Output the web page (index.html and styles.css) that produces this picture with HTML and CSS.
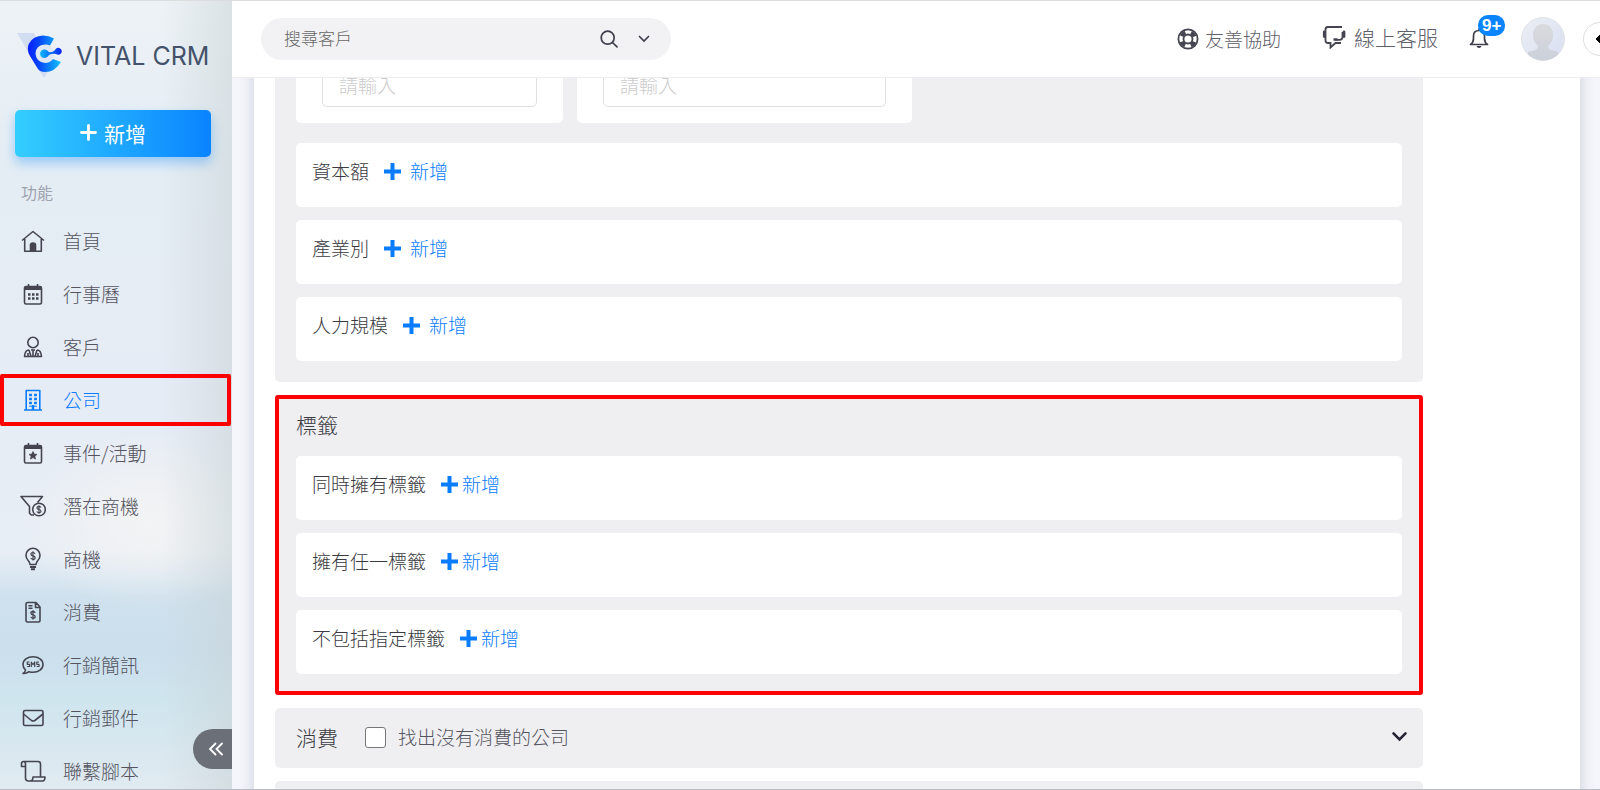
FILE: index.html
```html
<!DOCTYPE html>
<html lang="zh-Hant">
<head>
<meta charset="utf-8">
<title>Vital CRM</title>
<link rel="stylesheet" href="styles.css">
</head>
<body>
<svg class="defs" aria-hidden="true">
  <symbol id="plus" viewBox="0 0 17 17"><path d="M8.500 2v13M2 8.500h13" fill="none" stroke="currentColor" stroke-width="4" stroke-linecap="square"/></symbol>
  <symbol id="chevron" viewBox="0 0 14 10"><path d="M2 2l5 5 5-5" fill="none" stroke="currentColor" stroke-width="2.200" stroke-linecap="round"/></symbol>
</svg>
<div class="app">
  <aside class="sidebar">
    <a class="logo" href="#">
      <svg class="logo-mark" viewBox="0 0 45 45" aria-hidden="true">
        <defs>
          <linearGradient id="lg" x1="0" y1="0" x2="1" y2="0"><stop offset="0" stop-color="#0a1dfb"/><stop offset=".35" stop-color="#0648f8"/><stop offset="1" stop-color="#12c4fb"/></linearGradient>
          <linearGradient id="lg2" x1="0" y1="0" x2="1" y2="0"><stop offset="0" stop-color="#0cb6fb"/><stop offset="1" stop-color="#0a22f8"/></linearGradient>
        </defs>
        <path d="M0 0h17l8 16 6 23-3 5q-1 1-2 0z" fill="#d3ddf2"/>
        <circle cx="27" cy="21" r="10" fill="#dfe7f5"/>
        <path d="M37 5.500Q32 2.500 26 2.500 16 3 12 10.500 9 16 13 23l8 13q2 3 7 3 10 0 16-10l-8-3q-3 4-8 4-9-1-9.500-9.500Q19 12 28 11.500q3 0 5 1z" fill="url(#lg)"/>
        <path d="M28 16.500q2 0 4 2.500 3 1 6-2a3.500 3.500 0 1 1 1 4q-4-1-7 1-2 3-4 3a4.300 4.300 0 1 1 0-8.500z" fill="url(#lg2)"/>
      </svg>
      <span class="logo-text">VITAL CRM</span>
    </a>
    <button class="create" type="button"><svg viewBox="0 0 17 17" aria-hidden="true"><path d="M8.500 1.500v14M1.500 8.500h14" fill="none" stroke="#fff" stroke-width="2.800" stroke-linecap="round"/></svg>新增</button>
    <h2 class="nav-title">功能</h2>
    <nav class="nav">
      <a class="nav-item" href="#"><svg viewBox="0 0 26 26"><path d="M2 12.500L13 3.500l11 9M4.700 11v12.300h16.600V11"/><path class="solid" d="M10.500 23v-6q0-2 2.500-2t2.500 2v6z"/></svg>首頁</a>
      <a class="nav-item" href="#"><svg viewBox="0 0 26 26"><rect x="4.500" y="5.500" width="17" height="17.500" rx="1.500"/><path d="M4.500 7.500h17" stroke-width="3"/><path d="M8.500 3v3M17.500 3v3"/><path d="M8 13.500h10.500M8 17.500h10.500" stroke-width="2.400" stroke-dasharray="2.500 1.500"/></svg>行事曆</a>
      <a class="nav-item" href="#"><svg viewBox="0 0 26 26"><circle cx="13" cy="8.500" r="5.200"/><path d="M9 16q-4 0-4.500 6.500h17Q21 16 17 16M9 16l2 6.500M17 16l-2 6.500M11 16h4M13 16v6M8 19v3.500M18 19v3.500"/></svg>客戶</a>
      <a class="nav-item active" href="#" aria-current="page"><svg viewBox="0 0 26 26"><path d="M6.200 23V3.500h13.600V23M4 23h18"/><path d="M10.500 6.800v13M15.500 6.800v13" stroke-width="2.800" stroke-dasharray="2.500 1.500"/><path d="M13 18v5" stroke-width="2.500"/></svg>公司</a>
      <a class="nav-item" href="#"><svg viewBox="0 0 26 26"><rect x="4.500" y="5.500" width="17" height="17.500" rx="1.500"/><path d="M4.500 7.500h17" stroke-width="3"/><path d="M8.500 3v3M17.500 3v3"/><path class="solid" d="M13 11.500l1.200 2.600 2.800.3-2.100 1.900.6 2.800-2.500-1.500-2.500 1.500.6-2.800-2.100-1.900 2.800-.3z" stroke-width=".7"/></svg>事件/活動</a>
      <a class="nav-item" href="#"><svg viewBox="0 0 26 26"><path d="M11 22l-1.500-2v-6.500L1 3.500h21.500L17.500 9.500M11 22h3"/><circle cx="19" cy="16.500" r="6.300"/><path d="M21 14.500q-.5-1.200-2-1.200-2 0-2 1.500t2 1.700 2 1.700-2 1.500q-1.700 0-2.100-1.300M19 12.300v8.600" stroke-width="1.200"/></svg>潛在商機</a>
      <a class="nav-item" href="#"><svg viewBox="0 0 26 26"><path d="M10 18.500q0-2-2-4.300a7 7 0 1 1 10 0q-2 2.300-2 4.300z"/><path d="M10 21h6M11 23.300h4" stroke-width="2"/><path d="M15 7.800q-.5-1.300-2-1.300-2.100 0-2.100 1.600T13 9.900t2.100 1.800T13 13.300q-1.700 0-2.200-1.400M13 5.300v9.200" stroke-width="1.200"/></svg>商機</a>
      <a class="nav-item" href="#"><svg viewBox="0 0 26 26"><path d="M16 3.500H7.500q-1.500 0-1.500 1.500v16.500Q6 23 7.500 23h11q1.500 0 1.500-1.500V8zM15.500 3.500V8.500H20M8.500 6.800h4M8.500 9.300h4"/><path d="M15.200 13.800q-.5-1.300-2.200-1.300-2.100 0-2.100 1.600t2.100 1.800 2.100 1.800-2.100 1.600q-1.700 0-2.200-1.400M13 11.300v9.200" stroke-width="1.300"/></svg>消費</a>
      <a class="nav-item" href="#"><svg viewBox="0 0 26 26"><path d="M5.500 18A8.500 7.800 0 0 1 3 12.500C3 8 7.500 4.800 13 4.800s10 3.200 10 7.700-4.500 7.800-10 7.800q-2 0-4-.6Q6.500 21.700 3 21.500q2.200-1.300 2.500-3.500z"/><path d="M9.500 10H7.300v2.300h2.200v2.200H7.200M11.300 15v-5l1.700 2.700L14.700 10v5M19 10h-2.200v2.300H19v2.200h-2.300" stroke-width="1.200"/></svg>行銷簡訊</a>
      <a class="nav-item" href="#"><svg viewBox="0 0 26 26"><rect x="3.500" y="5.500" width="19.500" height="15" rx="1.500"/><path d="M3.500 9l8 6.500q1.700 1 3.300 0L23 9"/></svg>行銷郵件</a>
      <a class="nav-item" href="#"><svg viewBox="0 0 26 26"><path d="M5.500 8.500H1.500V6q0-2.500 2-2.500t2 2.500v14q0 3 3 3h14q2.500 0 2.500-4H13q0 4-3 4M3.500 3.500H18q2.500 0 2.500 2.500v13"/></svg>聯繫腳本</a>
    </nav>
    <button class="collapse" type="button" aria-label="收合選單"><svg viewBox="0 0 16 14" aria-hidden="true"><path d="M7.500 1.500L2 7l5.500 5.500M14 1.500L8.500 7l5.500 5.500" fill="none" stroke="#fff" stroke-width="1.800" stroke-linecap="round"/></svg></button>
  </aside>
  <div class="content">
    <header class="topbar">
      <form class="search">
        <input type="search" placeholder="搜尋客戶" aria-label="搜尋客戶">
        <button type="button" aria-label="搜尋"><svg width="18" height="18" viewBox="0 0 18 18"><g fill="none" stroke="#3f3f4c" stroke-width="1.700" stroke-linecap="round"><circle cx="7.700" cy="7.700" r="6.500"/><path d="M12.500 12.500l4.500 4.300"/></g></svg></button>
        <button type="button" aria-label="搜尋選項"><svg width="14" height="10" viewBox="0 0 14 10"><path d="M2.500 2.500L7 7l4.500-4.500" fill="none" stroke="currentColor" stroke-width="1.700" stroke-linecap="round"/></svg></button>
      </form>
      <div class="tools">
        <a class="help" href="#"><svg width="22" height="22" viewBox="0 0 22 22"><g fill="none" stroke="#454551"><circle cx="11" cy="11" r="9.600" stroke-width="1.800"/><circle cx="11" cy="11" r="4.500" stroke-width="1.800"/><circle cx="11" cy="11" r="7" stroke-width="4" stroke-dasharray="5.200 5.796" stroke-dashoffset="-2.900"/></g></svg>友善協助</a>
        <a class="service" href="#"><svg width="24" height="24" viewBox="0 0 24 24"><g fill="none" stroke="#454551" stroke-width="1.800"><path d="M20 2H6Q3.500 2 3.500 4.500v11q0 2.500 2.500 2.500h2.500v4.500l5-4.500H19"/><path d="M20.500 7v5q0 2.800-3 2.800h-4"/><path d="M2.300 7v4.500M22 7v4.500" stroke-width="2.800" stroke-linecap="round"/><path d="M11.500 14.500h4" stroke-width="2.500"/></g></svg>線上客服</a>
        <button class="bell" type="button" aria-label="通知 9+"><svg width="20" height="22" viewBox="0 0 20 22"><path d="M1.500 17.500h17q-3-2-3-6V9Q15.500 3.500 10 3.500T4.500 9v2.500q0 4-3 6zM10 1.500v2" fill="none" stroke="#3f3f4c" stroke-width="1.700" stroke-linejoin="round"/><path d="M7.500 19h5q-.5 2-2.500 2t-2.500-2z" fill="#3f3f4c"/></svg><span class="badge">9+</span></button>
        <button class="avatar" type="button" aria-label="使用者"><svg viewBox="0 0 44 44"><defs><linearGradient id="av" x1="0" y1="0" x2="1" y2="1"><stop offset="0" stop-color="#eceff4"/><stop offset="1" stop-color="#d8def2"/></linearGradient><linearGradient id="av2" x1="0" y1="0" x2="0" y2="1"><stop offset="0" stop-color="#d8dadd"/><stop offset="1" stop-color="#cbd0da"/></linearGradient><clipPath id="avc"><circle cx="22" cy="22" r="21.500"/></clipPath></defs><circle cx="22" cy="22" r="21.500" fill="url(#av)" stroke="#e0e2e6"/><path clip-path="url(#avc)" d="M22 7c6 0 10 4.500 10 11 0 5-2 8-5 11 0 4 3 4 10 6v9H7v-9c7-2 10-2 10-6-3-3-5-6-5-11C12 11.500 16 7 22 7z" fill="url(#av2)"/></svg></button>
        <button class="drawer" type="button" aria-label="展開側欄"><svg width="14" height="14" viewBox="0 0 14 14"><path d="M0 7l6-6v12z" fill="#000" stroke="#000" stroke-linejoin="round"/></svg></button>
      </div>
    </header>
    <main class="page">
      <div class="panel">
        <section class="group first">
          <div class="field-row">
            <div class="field narrow"><input type="text" placeholder="請輸入" aria-label="條件一"></div>
            <div class="field wide"><input type="text" placeholder="請輸入" aria-label="條件二"></div>
          </div>
          <div class="cards">
            <div class="card"><span>資本額</span><button class="add spaced" type="button"><svg><use href="#plus"/></svg>新增</button></div>
            <div class="card"><span>產業別</span><button class="add spaced" type="button"><svg><use href="#plus"/></svg>新增</button></div>
            <div class="card"><span>人力規模</span><button class="add spaced" type="button"><svg><use href="#plus"/></svg>新增</button></div>
          </div>
        </section>
        <section class="group tags">
          <h3>標籤</h3>
          <div class="cards">
            <div class="card"><span>同時擁有標籤</span><button class="add" type="button"><svg><use href="#plus"/></svg>新增</button></div>
            <div class="card"><span>擁有任一標籤</span><button class="add" type="button"><svg><use href="#plus"/></svg>新增</button></div>
            <div class="card"><span>不包括指定標籤</span><button class="add" type="button"><svg><use href="#plus"/></svg>新增</button></div>
          </div>
        </section>
        <section class="group spend">
          <h3>消費</h3>
          <label class="check"><input type="checkbox">找出沒有消費的公司</label>
          <button class="expand" type="button" aria-label="展開消費"><svg width="17" height="12"><use href="#chevron"/></svg></button>
        </section>
        <section class="group next"></section>
      </div>
    </main>
  </div>
</div>
</body>
</html>
```
FILE: styles.css
```css
* { box-sizing: border-box; }
body {
  margin: 0;
  font: 300 19px/26px "Noto Sans CJK TC", sans-serif;
  color: #3a3a42;
}
button, input { font: inherit; color: inherit; margin: 0; }
button { background: none; border: 0; padding: 0; cursor: pointer; display: flex; align-items: center; justify-content: center; }
a { color: inherit; text-decoration: none; }
h2, h3 { margin: 0; font-weight: 300; }
svg { display: block; flex: none; }
.defs { position: absolute; width: 0; height: 0; }

.app {
  display: flex;
  height: 100vh;
  overflow: hidden;
  border-top: 1px solid #dcdddf;
  border-bottom: 1px solid #b9bcc4;
}

/* Sidebar */
.sidebar {
  position: relative;
  flex: none;
  width: 232px;
  overflow: hidden;
  background:
    linear-gradient(90deg, rgba(200, 210, 212, 0) 70%, rgba(200, 210, 212, .5) 100%),
    radial-gradient(ellipse 130px 90px at 150px 520px, rgba(246, 245, 244, .8), rgba(246, 245, 244, 0)),
    linear-gradient(180deg, #edf2f6 0, #e4edf4 170px, #e6ecf5 400px, #e8eef5 550px, #cfe1ee 595px, #cbdfed 650px, #cfe5ee 700px, #e1eaf1 100%);
}
.logo { display: flex; align-items: center; gap: 14px; padding: 32px 0 0 17px; }
.logo-mark { width: 45px; height: 45px; }
.logo-text { font: 400 25px/28px Inter, sans-serif; color: #43526a; white-space: nowrap; }
.create {
  gap: 7px;
  width: 196px;
  height: 47px;
  margin: 32px 0 0 15px;
  padding-bottom: 2px;
  border-radius: 5px;
  background: linear-gradient(90deg, #34ceff, #0a84ff);
  box-shadow: 0 6px 12px rgba(10, 132, 255, .35);
  color: #fff;
  font-size: 21px;
  font-weight: 400;
}
.create svg { width: 17px; height: 17px; }
.nav-title { margin: 22px 0 10px 21px; font-size: 16px; line-height: 26px; color: #9ea2ac; font-weight: 400; }
.nav { display: flex; flex-direction: column; gap: 1px; }
.nav-item {
  display: flex;
  align-items: center;
  gap: 17px;
  height: 52px;
  width: 231px;
  padding-left: 20px;
  color: #54545f;
  flex: none;
}
.nav-item svg { width: 26px; height: 26px; fill: none; stroke: #454551; stroke-width: 1.6; stroke-linejoin: round; }
.nav-item .solid { fill: #454551; }
.nav-item.active { border: 4px solid #f00; border-radius: 2px; padding-left: 16px; color: #0a7cff; }
.nav-item.active svg { stroke: #0a7cff; }
.collapse {
  position: absolute;
  right: 0;
  bottom: 20px;
  width: 39px;
  height: 40px;
  padding-left: 6px;
  border-radius: 20px 0 0 20px;
  background: #6b6f78;
}
.collapse svg { width: 16px; height: 14px; }

/* Top bar */
.content { flex: 1; min-width: 0; display: flex; flex-direction: column; }
.topbar {
  flex: none;
  display: flex;
  align-items: center;
  justify-content: space-between;
  height: 77px;
  padding-left: 29px;
  background: #fff;
  border-bottom: 1px solid #ededf0;
  overflow: hidden;
}
.search {
  display: flex;
  align-items: center;
  gap: 19px;
  width: 410px;
  height: 42px;
  padding: 0 20px 0 23px;
  border-radius: 21px;
  background: #f2f2f4;
  color: #3f3f4c;
}
.search input { flex: 1; min-width: 0; height: 26px; padding: 0 0 2px; border: 0; background: none; outline: 0; font-size: 17px; }
.search input::placeholder { color: #666; opacity: 1; }
.tools { display: flex; align-items: center; color: #60606a; }
.help { display: flex; align-items: center; gap: 6px; margin-right: 41px; }
.service { display: flex; align-items: center; gap: 8px; margin-right: 31px; padding-bottom: 4px; font-size: 21px; }
.bell { position: relative; padding-bottom: 2px; }
.badge {
  position: absolute;
  left: 9px;
  top: -12px;
  padding: 0 4px;
  border-radius: 10px;
  background: #0a84ff;
  color: #fff;
  font: 700 17px/21px "Liberation Sans", sans-serif;
}
.avatar { margin-left: 32px; }
.avatar svg { width: 44px; height: 44px; }
.drawer {
  width: 34px;
  height: 34px;
  margin: 0 -17px 0 18px;
  border: 1px solid #dcdde0;
  border-radius: 50%;
  background: #fff;
}
.drawer svg { margin-left: 6px; }

/* Filter form */
.page { flex: 1; min-height: 0; overflow: hidden; padding: 0 20px 0 22px; background: #f4f6fb; }
.panel {
  display: flex;
  flex-direction: column;
  gap: 13px;
  margin-top: -40px;
  padding: 0 157px 0 21px;
  background: #fff;
  box-shadow: 0 0 14px rgba(60, 65, 90, .22);
}
.group { border-radius: 5px; background: #efeff1; }
.first { padding: 0 21px 21px; }
.field-row { display: flex; gap: 14px; margin-bottom: 20px; }
.field { padding: 28px 26px 16px; border-radius: 5px; background: #fff; }
.narrow { width: 267px; }
.wide { width: 335px; }
.field input { width: 100%; height: 41px; padding: 0 16px 4px; border: 1px solid #dfe0e3; border-radius: 5px; background: #fff; }
.field input::placeholder { color: #ccc; opacity: 1; }
.cards { display: flex; flex-direction: column; gap: 13px; }
.card {
  display: flex;
  align-items: flex-start;
  gap: 15px;
  min-height: 64px;
  padding: 15px 16px;
  border-radius: 5px;
  background: #fff;
}
.add { gap: 4px; color: #0a7cff; }
.add.spaced { gap: 9px; }
.add svg { width: 17px; height: 17px; }
.tags { padding: 12px 17px 17px; border: 4px solid #f00; border-radius: 3px; }
h3 { font-size: 21px; line-height: 26px; }
.tags h3 { margin-bottom: 19px; }
.spend { display: flex; align-items: center; height: 60px; padding: 0 15px 2px 21px; }
.check { display: flex; align-items: center; gap: 12px; margin-left: 27px; color: #54545f; }
.check input { appearance: none; width: 21px; height: 21px; border: 1px solid #777; border-radius: 3px; background: #fff; }
.expand { margin-left: auto; color: #232335; }
.next { height: 60px; }
```
